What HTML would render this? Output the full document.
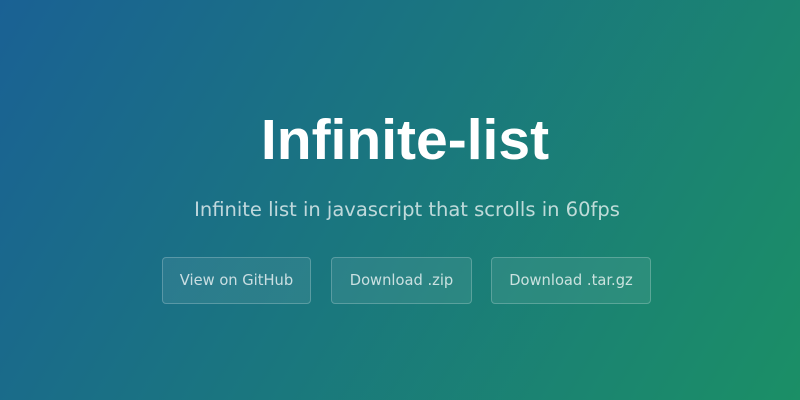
<!DOCTYPE html>
<html><head><meta charset="utf-8"><style>
html,body{margin:0;padding:0;width:800px;height:400px;overflow:hidden}
body{background:linear-gradient(120deg,#1a6194,#1b8f66);font-family:"DejaVu Sans","Liberation Sans",sans-serif;color:#fff;position:relative}
h1{position:absolute;left:10px;right:0;top:106px;margin:0;text-align:center;font-family:"Liberation Sans",sans-serif;font-size:57px;font-weight:bold;line-height:68px}
p{position:absolute;left:14px;right:0;top:196px;margin:0;text-align:center;font-size:19.5px;color:rgba(255,255,255,0.72);line-height:28px}
.b{position:absolute;top:257px;height:47px;box-sizing:border-box;border:1px solid rgba(255,255,255,0.22);background:rgba(255,255,255,0.08);border-radius:4px;color:rgba(255,255,255,0.75);font-size:14.7px;display:flex;align-items:center;justify-content:center}
</style></head><body>
<h1>Infinite-list</h1>
<p>Infinite list in javascript that scrolls in 60fps</p>
<div class="b" style="left:162px;width:149px">View on GitHub</div>
<div class="b" style="left:331px;width:141px">Download .zip</div>
<div class="b" style="left:491px;width:160px">Download .tar.gz</div>
</body></html>
